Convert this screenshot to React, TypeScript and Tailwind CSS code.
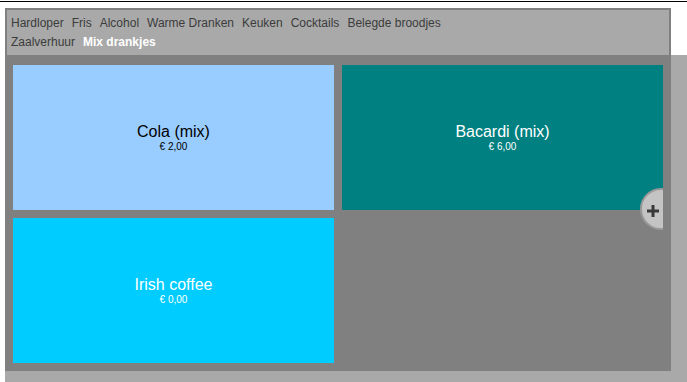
import React from 'react';

type Tile = { name: string; price: string; bg: string; fg: string };

const tiles: Tile[] = [
  { name: 'Cola (mix)', price: '€ 2,00', bg: 'bg-[#99ccff]', fg: 'text-black' },
  { name: 'Bacardi (mix)', price: '€ 6,00', bg: 'bg-[#008080]', fg: 'text-white' },
  { name: 'Irish coffee', price: '€ 0,00', bg: 'bg-[#00ccff]', fg: 'text-white' },
];

const row1 = ['Hardloper', 'Fris', 'Alcohol', 'Warme Dranken', 'Keuken', 'Cocktails', 'Belegde broodjes'];
const row2 = ['Zaalverhuur'];

export default function App() {
  return (
    <div className="w-[687px] h-[382px] overflow-hidden bg-white font-['Liberation_Sans',Arial,sans-serif]">
      {/* top rule */}
      <div className="mt-[1px] h-[1px] bg-black" />

      {/* category nav */}
      <div className="ml-[5px] mt-[6px] w-[666px] h-[47px] border-2 border-b-0 border-[#808080] bg-[#a9a9a9] pl-[4px] pt-[3px] text-[12px] text-[#3c3c3c]">
        <div className="flex gap-x-[8px] h-[19px] items-center">
          {row1.map((c) => (
            <span key={c}>{c}</span>
          ))}
        </div>
        <div className="flex gap-x-[8px] h-[19px] items-center">
          {row2.map((c) => (
            <span key={c}>{c}</span>
          ))}
          <span className="font-bold text-white">Mix drankjes</span>
        </div>
      </div>

      {/* product area */}
      <div className="ml-[5px] mt-[2px] w-[682px] h-[330px] bg-[#a9a9a9]">
        <div className="-mt-[2px] w-[666px] h-[316px] bg-[#808080] px-[8px] pt-[10px] pb-[8px]">
          <div className="relative overflow-hidden grid grid-cols-2 gap-[8px]">
            {tiles.map((t) => (
              <div
                key={t.name}
                className={`h-[145px] flex flex-col items-center justify-center ${t.bg} ${t.fg}`}
              >
                <div className="text-[16px] leading-[18px]">{t.name}</div>
                <div className="text-[10px] leading-[12px]">{t.price}</div>
              </div>
            ))}
            {/* add button, half hidden */}
            <div className="absolute left-[627px] top-[123px] w-[42px] h-[42px] rounded-full bg-[#c4c4c4] border-2 border-[#9a9a9a]">
              <svg width="14" height="14" viewBox="0 0 14 14" className="absolute left-[4px] top-[14px]">
                <path d="M7 1v12M1 7h12" stroke="#3a3a3a" strokeWidth="3" />
              </svg>
            </div>
          </div>
        </div>
      </div>
    </div>
  );
}
